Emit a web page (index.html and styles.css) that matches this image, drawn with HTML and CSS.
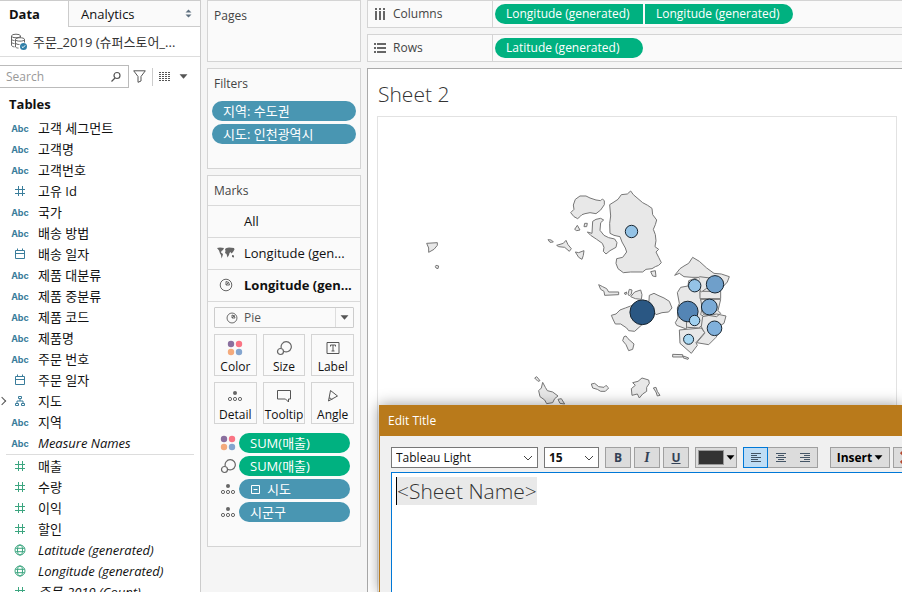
FILE: index.html
```html
<!DOCTYPE html>
<html lang="ko">
<head>
<meta charset="utf-8">
<title>Sheet 2</title>
<link rel="stylesheet" href="styles.css">
</head>
<body>
<svg class="sprite" aria-hidden="true">
  <symbol id="hash" viewBox="0 0 12 12"><path d="M4.5 1v10M8.500 1v10M1 4.500h10M1 8.500h10" fill="none" stroke="currentColor"/></symbol>
  <symbol id="cal" viewBox="0 0 12 12"><path d="M1.500 2.500h9v8h-9zM1.500 5.500h9M3.500 .5v2M8.500 .5v2" fill="none" stroke="currentColor"/></symbol>
  <symbol id="globe" viewBox="0 0 12 12"><g fill="none" stroke="currentColor"><circle cx="6" cy="6" r="5"/><ellipse cx="6" cy="6" rx="2.500" ry="5"/><path d="M1.500 4.300h9M1.500 7.700h9"/></g></symbol>
  <symbol id="tree" viewBox="0 0 12 12"><path d="M4.500 1.500h3v2h-3zM1.500 8.500h3v2h-3zM7.500 8.500h3v2h-3zM6 3.500v2.500M3 8.500v-2.500h6v2.500" fill="none" stroke="currentColor"/></symbol>
  <symbol id="pie" viewBox="0 0 14 14"><g fill="none" stroke="currentColor"><circle cx="7" cy="7" r="5.800"/><path d="M7 7V3.500A3.500 3.500 0 0 1 10.500 7zM7 7l3-3"/></g></symbol>
  <symbol id="colors" viewBox="0 0 16 16"><circle cx="4" cy="4" r="3.200" fill="#8a6f9e"/><circle cx="12" cy="4" r="3.200" fill="#fa7484"/><circle cx="4" cy="12" r="3.200" fill="#f4aa7c"/><circle cx="12" cy="12" r="3.200" fill="#84a5cf"/></symbol>
  <symbol id="size" viewBox="0 0 16 16"><g fill="none" stroke="#666" stroke-width="1.200"><path d="M5.300 8.200A5.100 5.100 0 1 1 7.600 11.200"/><circle cx="4.500" cy="11.500" r="3"/></g></symbol>
  <symbol id="detail" viewBox="0 0 16 16"><circle cx="8" cy="5" r="2" fill="#666"/><g fill="none" stroke="#666"><circle cx="3" cy="11" r="1.600"/><circle cx="8" cy="11" r="1.600"/><circle cx="13" cy="11" r="1.600"/></g></symbol>
  <symbol id="chev" viewBox="0 0 10 10"><path d="M1 3l4 4 4-4" fill="none" stroke="#444"/></symbol>
  <symbol id="down" viewBox="0 0 8 8"><path d="M.5 2h7L4 6z" fill="currentColor"/></symbol>
</svg>

<div class="app">
  <aside class="data-pane">
    <nav class="tabs">
      <button class="tab active">Data</button>
      <button class="tab other"><span>Analytics</span>
        <svg width="7" height="9" viewBox="0 0 7 9"><path d="M.5 3.500h6L3.500 .5zM.5 5.500h6L3.500 8.500z" fill="#5f7080"/></svg>
      </button>
    </nav>
    <div class="source">
      <svg width="18" height="18" viewBox="0 0 18 18"><g fill="none" stroke="#666"><ellipse cx="6" cy="3" rx="4.500" ry="1.800"/><path d="M1.500 3v9c0 1 1 1.700 3 1.900M10.500 3v1.500M1.500 6c0 .8 1 1.400 3 1.600M1.500 9c0 .8 1 1.400 3 1.600"/><path d="M5.500 6.500v7.500c.5.700 1.500 1 3 1.100M5.500 6.500c0-2.400 9-2.400 9 0v3M5.500 6.500c0 2.200 9 2.200 9 0M5.500 10c.5 1 2 1.500 4 1.500"/></g><circle cx="13.500" cy="13.500" r="3.500" fill="#2f7fa8"/><path d="M11.800 13.500l1.200 1.200 2.200-2.400" fill="none" stroke="#fff"/></svg>
      <span>주문_2019 (슈퍼스토어_...</span>
    </div>
    <div class="search-row">
      <label class="search">
        <input type="text" placeholder="Search" aria-label="Search">
        <svg width="12" height="12" viewBox="0 0 12 12"><g fill="none" stroke="#555" stroke-width="1.200"><circle cx="7" cy="4.500" r="3"/><path d="M5 7L1.500 10.500"/></g></svg>
      </label>
      <button class="plain" aria-label="Filter"><svg width="13" height="13" viewBox="0 0 13 13"><path d="M.7 .8h11.600L8 6.500v4.500L5 12.300V6.500z" fill="none" stroke="#555"/></svg></button>
      <i class="bar"></i>
      <button class="plain views" aria-label="View"><svg width="12" height="9" viewBox="0 0 12 9"><path d="M0 .5h12M0 2.500h12M0 4.500h12M0 6.500h12M0 8.500h12" stroke="#555" stroke-dasharray="2 1"/></svg><svg width="9" height="9"><use href="#down"/></svg></button>
    </div>
    <h2>Tables</h2>
    <ul class="fields dims">
      <li><b>Abc</b>고객 세그먼트</li>
      <li><b>Abc</b>고객명</li>
      <li><b>Abc</b>고객번호</li>
      <li><svg><use href="#hash"/></svg>고유 Id</li>
      <li><b>Abc</b>국가</li>
      <li><b>Abc</b>배송 방법</li>
      <li><svg><use href="#cal"/></svg>배송 일자</li>
      <li><b>Abc</b>제품 대분류</li>
      <li><b>Abc</b>제품 중분류</li>
      <li><b>Abc</b>제품 코드</li>
      <li><b>Abc</b>제품명</li>
      <li><b>Abc</b>주문 번호</li>
      <li><svg><use href="#cal"/></svg>주문 일자</li>
      <li class="group"><svg><use href="#tree"/></svg>지도</li>
      <li><b>Abc</b>지역</li>
      <li><b>Abc</b><em>Measure Names</em></li>
    </ul>
    <ul class="fields measures">
      <li><svg><use href="#hash"/></svg>매출</li>
      <li><svg><use href="#hash"/></svg>수량</li>
      <li><svg><use href="#hash"/></svg>이익</li>
      <li><svg><use href="#hash"/></svg>할인</li>
      <li><svg><use href="#globe"/></svg><em>Latitude (generated)</em></li>
      <li><svg><use href="#globe"/></svg><em>Longitude (generated)</em></li>
      <li><svg><use href="#hash"/></svg><em>주문_2019 (Count)</em></li>
    </ul>
  </aside>

  <section class="cards">
    <div class="card pages"><h3>Pages</h3></div>
    <div class="card filters">
      <h3>Filters</h3>
      <div class="pills"><button class="pill blue ko">지역: 수도권</button><button class="pill blue ko">시도: 인천광역시</button></div>
    </div>
    <div class="card marks">
      <h3>Marks</h3>
      <button class="layer"><i></i>All</button>
      <button class="layer"><svg width="18" height="12" viewBox="0 0 18 12"><path d="M0 1l3-.5L7 1 6 3 4.500 4 4 5.500 6 7l-.5 2L4.500 11.500 4 8 3 6.500 2 3.500zM8 2l1.500-1L12 .5l5 .5.500 1.500L16 5l-1.500 1.500L13.500 5 12.500 6l-.5 2-1.500 2.500L9.500 7 8 6l.5-2zM15 8l2 .5v2l-2-.5z" fill="#666"/></svg>Longitude (gen...</button>
      <button class="layer chosen"><svg width="14" height="14"><use href="#pie"/></svg>Longitude (gen...</button>
      <div class="mark-body">
        <label class="mark-type">
          <svg class="lead" width="12" height="12"><use href="#pie"/></svg>
          <select aria-label="Mark type"><option>Pie</option></select>
          <span class="drop"><svg width="9" height="9"><use href="#down"/></svg></span>
        </label>
        <div class="mark-grid">
          <button><svg><use href="#colors"/></svg>Color</button>
          <button><svg><use href="#size"/></svg>Size</button>
          <button><svg viewBox="0 0 16 16"><path d="M2 2.500h12v11H2zM5.500 6.500v-1.500h5v1.500M8 5v6M6.500 11h3" fill="none" stroke="#555"/></svg>Label</button>
          <button><svg><use href="#detail"/></svg>Detail</button>
          <button><svg viewBox="0 0 16 16"><path d="M1.500 2.500h13v8.500h-2v3l-3-3h-8z" fill="none" stroke="#555"/></svg>Tooltip</button>
          <button><svg viewBox="0 0 16 16"><path d="M5.500 2.500l7 5.500-9 5zM4 10c1.500 0 2.500.8 3 1.600" fill="none" stroke="#555"/></svg>Angle</button>
        </div>
      </div>
      <div class="encodings">
        <svg><use href="#colors"/></svg><button class="pill green ko">SUM(매출)</button>
        <svg><use href="#size"/></svg><button class="pill green ko">SUM(매출)</button>
        <svg><use href="#detail"/></svg><button class="pill blue ko"><svg class="minus" viewBox="0 0 9 9"><path d="M.5 .5h8v8h-8zM2.500 4.500h4" fill="none" stroke="#fff"/></svg>시도</button>
        <svg><use href="#detail"/></svg><button class="pill blue ko">시군구</button>
      </div>
    </div>
  </section>

  <main class="work">
    <div class="shelf">
      <div class="shelf-name"><svg width="12" height="12" viewBox="0 0 12 12"><path d="M2 0v2M6 0v2M10 0v2M2 3v9M6 3v9M10 3v9" stroke="#666" stroke-width="2"/></svg>Columns</div>
      <div class="shelf-pills"><button class="pill green first">Longitude (generated)</button><button class="pill green last">Longitude (generated)</button></div>
    </div>
    <div class="shelf">
      <div class="shelf-name"><svg width="12" height="12" viewBox="0 0 12 12"><path d="M0 2h2M0 6h2M0 10h2M3 2h9M3 6h9M3 10h9" stroke="#666" stroke-width="2"/></svg>Rows</div>
      <div class="shelf-pills"><button class="pill green">Latitude (generated)</button></div>
    </div>
    <div class="sheet">
      <h1>Sheet 2</h1>
      <div class="plot">
        <svg viewBox="378 117 518 476" role="img" aria-label="Map">
          <g class="land" transform="translate(560 180) scale(.33333)">
            <path d="M32 98L42 88 40 75 46 58 60 48 78 48 90 54 108 60 122 62 127 57 133 62 133 74 122 90 108 101 90 98 75 101 66 104 62 108 53 116 42 110z"/>
            <path d="M98 124L108 118 122 115 131 120 122 128 120 151 132 166 146 173 164 177 171 188 168 202 150 212 138 222 130 214 132 202 127 190 110 178 92 166 82 156 96 160z"/>
            <path d="M149 74L162 66 174 58 184 44 202 42 212 33 220 44 234 56 248 68 263 76 276 85 278 104 290 120 286 134 280 148 286 164 288 182 285 200 296 208 288 216 296 232 304 248 296 256 286 260 276 266 258 268 248 276 212 276 190 278 174 266 168 250 170 236 188 232 200 216 196 204 186 186 180 170 162 166 150 160 149 130 152 108z"/>
            <path d="M272 275L286 272 288 290 278 288z"/>
            <path d="M44 148L52 136 60 150 50 152zM72 140L74 130 82 130 80 140zM46 216L56 218 72 212 70 226 66 238 56 232z"/>
            <path d="M116 314L128 320 140 326 146 336 176 336 176 344 134 346 132 334 122 328z"/>
          </g>
          <g class="land" transform="translate(410 180) scale(.33333)">
            <path d="M50 190L82 188 82 196 72 208 56 217 56 204zM76 260L78 256 86 258 84 266 78 264z"/>
            <path d="M414 179L424 180 430 186 420 187zM440 196L460 190 468 181 474 194 484 206 478 214 464 202 446 200z"/>
            <path d="M374 594L380 590 390 602 384 604zM398 607L406 622 412 632 428 636 444 648 434 656 428 668 410 671 404 660 390 650 386 632 394 624zM444 658L454 656 464 672 450 670z"/>
            <path d="M544 612L554 610 566 620 582 622 588 616 596 624 586 634 572 634 562 628 548 624z"/>
          </g>
          <g class="land" transform="translate(600 280) scale(.33333)">
            <path d="M34 106L48 102 60 90 76 84 92 78 130 60 164 102 146 106 126 134 104 154 86 152 80 144 62 132 46 132 40 120z"/>
            <path d="M146 74L148 46 162 40 174 46 192 54 208 64 216 84 206 96 186 98 168 104z"/>
            <path d="M92 50L104 36 122 30 126 44 124 58 106 56zM84 42L88 28 96 30 94 42 88 48zM72 40L80 36 78 44z"/>
            <path d="M78 168L84 176 102 192 98 208 86 212 78 194 68 182 72 170z"/>
            <path d="M94 326L106 316 98 308 114 304 126 294 146 300 148 310 140 322 140 334 128 342 118 354 112 342 96 346zM160 324L168 322 172 334 180 346 172 348 168 336z"/>
            <path d="M218 223L248 224 248 231 218 231zM250 228L266 234 264 238 250 234z"/>
            <path d="M232 38L242 22 264 18 266 2 300 -10 320 10 300 28 302 60 310 70 302 104 310 108 314 130 296 144 262 142 256 146 230 136 226 128 234 114 232 84 238 70z"/>
            <path d="M224 -14L240 -34 252 -42 266 -50 278 -68 298 -56 320 -36 342 -20 364 -18 388 -10 382 6 364 26 360 38 302 38 306 18 298 -8 276 -8 252 -10 238 -20z"/>
            <path d="M300 34H362V56H300zM302 58L362 58 354 92 362 100 350 110 310 104zM308 110L350 102 378 108 372 130 362 136 364 146 348 172 326 194 290 188 314 160 304 140z"/>
            <path d="M238 150L304 144 314 158 288 188 292 196 274 220 240 190zM258 94L260 146M298 -10L330 -6 336 14 304 36"/>
          </g>
          <g class="dots">
            <circle cx="631.500" cy="231.500" r="6.200" fill="#94c3e6"/>
            <circle cx="694.700" cy="285.700" r="6.200" fill="#94c3e6"/>
            <circle cx="715" cy="284.300" r="8.700" fill="#6f9fca"/>
            <circle cx="642.300" cy="312.300" r="12.400" fill="#2a5783"/>
            <circle cx="687.800" cy="311.500" r="10.300" fill="#5485b5"/>
            <circle cx="709.300" cy="307" r="7.900" fill="#7aaad6"/>
            <circle cx="694.600" cy="320.500" r="5.200" fill="#a0d0ef"/>
            <circle cx="714.500" cy="328.300" r="7.300" fill="#80b0db"/>
            <circle cx="688.600" cy="339.300" r="5" fill="#a7d7f2"/>
          </g>
        </svg>
      </div>
    </div>
    <div class="dialog" role="dialog" aria-label="Edit Title">
      <header>Edit Title</header>
      <div class="toolbar">
        <label class="combo font"><select aria-label="Font"><option>Tableau Light</option></select><svg width="10" height="10"><use href="#chev"/></svg></label>
        <label class="combo points"><select aria-label="Size"><option>15</option></select><svg width="10" height="10"><use href="#chev"/></svg></label>
        <div class="styles"><button class="tool b">B</button><button class="tool i">I</button><button class="tool u">U</button></div>
        <button class="tool swatch" aria-label="Text color"><i></i><svg width="9" height="9"><use href="#down"/></svg></button>
        <div class="align">
          <button class="tool on" aria-label="Align left"><svg viewBox="0 0 10 9"><path d="M0 .5h10M0 2.500h6M0 4.500h10M0 6.500h7M0 8.500h10"/></svg></button>
          <button class="tool" aria-label="Align center"><svg viewBox="0 0 10 9"><path d="M0 .5h10M2 2.500h6M0 4.500h10M2 6.500h6M0 8.500h10"/></svg></button>
          <button class="tool" aria-label="Align right"><svg viewBox="0 0 10 9"><path d="M0 .5h10M4 2.500h6M0 4.500h10M4 6.500h6M0 8.500h10"/></svg></button>
        </div>
        <div class="tail">
          <button class="tool insert">Insert<svg width="9" height="9"><use href="#down"/></svg></button>
          <button class="tool clear" aria-label="Clear"><svg width="12" height="13" viewBox="0 0 12 13"><path d="M1 1l10 11M11 1L1 12" stroke="#b5482f" stroke-width="3"/></svg></button>
        </div>
      </div>
      <div class="editor" contenteditable="true" role="textbox" aria-label="Title"><span>&lt;Sheet Name&gt;</span></div>
    </div>
  </main>
</div>
</body>
</html>
```
FILE: styles.css
```css
* { box-sizing: border-box; }
body {
  margin: 0;
  background: #f5f5f5;
  color: #111;
  font: 13px/20px "Open Sans", "Noto Sans CJK KR", sans-serif;
  overflow: hidden;
}
button, input, select { font: inherit; color: inherit; margin: 0; padding: 0; border: 0; background: none; border-radius: 0; }
h1, h2, h3, ul { margin: 0; padding: 0; font-weight: 400; list-style: none; }
svg { display: block; flex: none; }
.sprite { width: 0; height: 0; position: absolute; }
.app { display: grid; grid-template-columns: 201px 154px minmax(0, 1fr); column-gap: 6px; height: 100vh; }

/* Data pane */
.data-pane { background: #fff; border-right: 1px solid #ccc; border-top: 1px solid #ccc; overflow: hidden; }
.tabs { display: flex; height: 26px; }
.tab.active { width: 68px; padding-left: 9px; text-align: left; font-weight: 700; }
.tab.other { flex: 1; display: flex; align-items: center; justify-content: space-between; padding: 0 8px 0 12px; background: #fafafa; border: solid #ccc; border-width: 0 0 1px 1px; }
.source { display: flex; align-items: center; gap: 5px; height: 30px; padding-left: 10px; border-bottom: 1px solid #ddd; color: #333; white-space: nowrap; }
.search-row { display: flex; align-items: center; height: 23px; margin-top: 8px; }
.search { display: flex; align-items: center; width: 129px; height: 23px; padding: 0 6px; border: 1px solid #bbb; border-left: 0; font-size: 12px; }
.search input { flex: 1; min-width: 0; outline: 0; }
.search input::placeholder { color: #999; }
.plain { display: flex; align-items: center; margin-left: 4px; }
.bar { width: 1px; height: 18px; margin: 0 6px; background: #ccc; }
.views { gap: 8px; margin: 0; color: #555; }
.data-pane h2 { padding: 7px 9px 4px; font-size: 13px; font-weight: 700; line-height: 18px; }
.fields li { display: flex; align-items: center; height: 21px; gap: 9px; padding-left: 11px; white-space: nowrap; }
.fields b, .fields svg { width: 18px; height: 12px; flex: none; color: #3a7d9b; font: 700 9px/14px "Inter", sans-serif; text-align: center; }
.measures svg { color: #3ba57f; }
.dims { margin-right: 6px; padding-bottom: 1px; }
.measures { margin: 0 6px; border-top: 1px solid #ddd; }
.fields.measures li { padding-left: 5px; }
.group::before { content: ""; width: 5px; height: 5px; margin: 0 -3px 0 -12px; border: solid #555; border-width: 1px 1px 0 0; transform: rotate(45deg); }

/* Cards */
.cards { display: flex; flex-direction: column; gap: 6px; color: #111; }
.card { border: 1px solid #d4d4d4; background: #fafafa; }
.card h3 { padding: 5px 6px; line-height: 20px; font-size: 12px; color: #444; }
.pages { height: 62px; }
.filters { height: 101px; }
.marks { height: 372px; }
.pills { display: grid; gap: 3px; padding: 2px 4px; }
.pill { display: flex; align-items: center; height: 20px; padding: 0 11px; border-radius: 10px; color: #fff; font-size: 12px; white-space: nowrap; }
.ko { font-size: 13px; }
.blue { background: #4996b2; }
.green { background: #00b180; }
.marks h3 { height: 29px; }
.layer { display: flex; align-items: center; width: 100%; height: 32px; padding-bottom: 2px; border-top: 1px solid #d9d9d9; white-space: nowrap; }
.layer > svg, .layer > i { width: 18px; margin: 0 9px; color: #666; }
.layer > svg { height: 14px; }
.chosen { font-weight: 700; }
.mark-body { padding: 5px 6px 0; border-top: 1px solid #d9d9d9; }
.mark-type { display: flex; align-items: center; height: 21px; border: 1px solid #ccc; border-radius: 1px; color: #555; font-size: 12px; }
.lead { margin: 0 6px 0 11px; }
.mark-type select { flex: 1; min-width: 0; appearance: none; outline: 0; }
.drop { display: grid; place-items: center; width: 18px; height: 19px; border-left: 1px solid #ddd; }
.mark-grid { display: grid; grid-template-columns: repeat(3, 1fr); gap: 6px; padding-top: 6px; }
.mark-grid button { display: flex; flex-direction: column; align-items: center; gap: 2px; height: 42px; padding-top: 5px; border: 1px solid #d4d4d4; font-size: 12px; line-height: 18px; }
.mark-grid svg, .encodings > svg { width: 16px; height: 16px; }
.encodings { display: grid; grid-template-columns: 16px 1fr; align-items: center; gap: 3px; padding: 9px 10px 0 12px; }
.minus { width: 9px; height: 9px; margin: 0 7px 0 1px; }

/* Shelves and sheet */
.work { position: relative; display: flex; flex-direction: column; gap: 6px; min-width: 0; overflow: hidden; }
.shelf { display: flex; flex: none; height: 28px; background: #fafafa; border: 1px solid #d4d4d4; border-right: 0; color: #444; font-size: 12px; }
.shelf-name { display: flex; align-items: center; gap: 7px; width: 125px; padding-left: 6px; border-right: 1px solid #d4d4d4; }
.shelf-pills { display: flex; align-items: center; gap: 2px; padding-left: 2px; }
.shelf-pills .pill { width: 148px; }
.shelf-pills .first { border-radius: 10px 0 0 10px; }
.shelf-pills .last { border-radius: 0 10px 10px 0; }
.sheet { display: flex; flex-direction: column; flex: 1; min-height: 0; padding: 11px 5px 0 9px; background: #fff; border: solid #aaa; border-width: 1px 0 0 1px; }
h1 { padding: 0 1px 8px; font-size: 21px; line-height: 28px; font-weight: 300; color: #333; }
.plot { flex: 1; min-height: 0; overflow: hidden; border: 1px solid #e2e2e2; }
.plot svg { width: 100%; }
.land path { fill: #e8e8e8; stroke: #777; vector-effect: non-scaling-stroke; stroke-linejoin: round; }
.dots circle { stroke: #182632; }

/* Title editor */
.dialog { position: absolute; top: 405px; left: 12px; right: 0; bottom: 0; display: flex; flex-direction: column; background: #f0f0f0; border-left: 1px solid #b97a1b; box-shadow: 0 0 14px rgba(0, 0, 0, .4); }
.dialog header { height: 31px; padding-left: 8px; background: #b97a1b; color: #fff; line-height: 31px; font-size: 12px; }
.toolbar { display: flex; flex: none; gap: 6px; padding: 11px 0 4px 11px; font-size: 12px; }
.toolbar > * { flex: none; }
.combo { display: flex; align-items: center; height: 21px; padding: 0 4px; border: 1px solid #777; background: #fff; }
.combo select { flex: 1; min-width: 0; appearance: none; outline: 0; }
.font { width: 147px; }
.points { width: 55px; font-weight: 700; }
.styles { display: flex; gap: 3px; }
.tool { display: grid; place-items: center; width: 26px; height: 21px; border: 1px solid #a0a0a0; background: #dcdcdc; color: #334155; font-weight: 700; line-height: 16px; }
.i { font-style: italic; font-family: "Liberation Serif", serif; font-size: 14px; }
.u { text-decoration: underline; }
.swatch { display: flex; align-items: center; justify-content: space-between; width: 42px; padding: 0 1px 0 2px; color: #000; }
.swatch i { width: 26px; height: 15px; background: #333; border: 1px solid #999; }
.align { display: flex; }
.align .tool { width: 25px; border-left: 0; }
.align .tool:nth-child(2) { border-right: 0; }
.align .on { border: 1px solid #0078d7; background: #bfddf5; }
.align svg { width: 10px; height: 9px; stroke: #445566; }
.tail { display: flex; gap: 3px; margin-left: 6px; }
.insert { display: flex; justify-content: center; align-items: center; gap: 2px; width: 60px; color: #000; }
.clear { place-items: center start; padding-left: 6px; }
.editor { flex: 1; margin-left: 11px; padding: 4px; background: #fff; border: solid #0078d7; border-width: 1px 0 0 1px; outline: 0; color: #333; font-size: 21px; font-weight: 300; line-height: 28px; }
.editor span { display: inline-block; background: #e9e9e9; border-left: 1px solid #000; }
```
